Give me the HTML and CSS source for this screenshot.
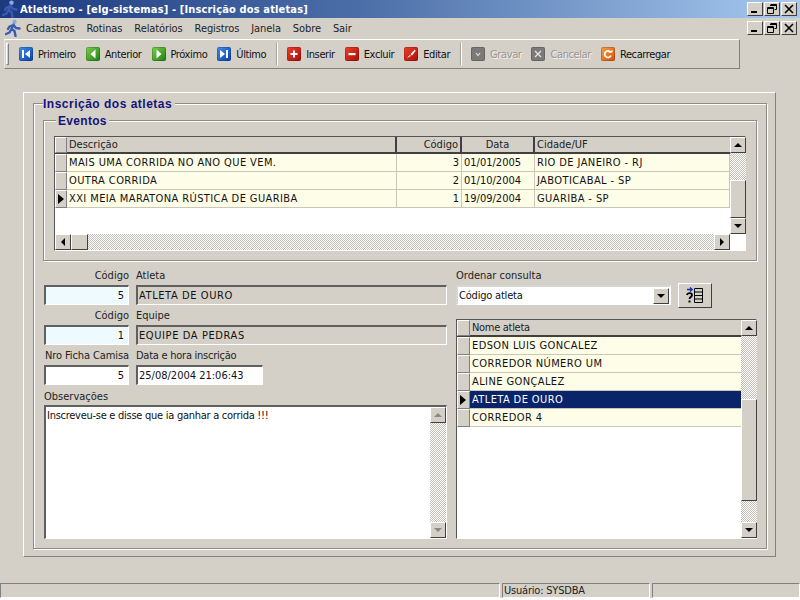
FILE: index.html
```html
<!DOCTYPE html>
<html lang="pt-BR">
<head>
<meta charset="utf-8">
<title>Atletismo</title>
<link rel="stylesheet" href="styles.css">
</head>
<body>
<svg class="defs" width="0" height="0" aria-hidden="true">
  <defs>
    <symbol id="runner" viewBox="0 0 16 18">
      <circle cx="9.5" cy="2.8" r="2.2" fill="#8fa8e4"/>
      <path d="M8.5 5.500 L6.500 10 L9.500 12 L10.500 17 M6.500 10 L4.500 13.500 L1 15 M8.500 6 L4.500 7.500 L3 10 M8.500 6 L11 9 L14.500 9.500" fill="none" stroke="#3a5cb0" stroke-width="2.400" stroke-linecap="round" stroke-linejoin="round"/>
    </symbol>
  </defs>
</svg>
<div class="app">
  <header class="titlebar">
    <svg class="runner" width="16" height="18"><use href="#runner"/></svg>
    <span class="title-text">Atletismo - [elg-sistemas] - [Inscrição dos atletas]</span>
    <div class="winbtns">
      <span class="wb"><svg width="10" height="10"><rect x="1" y="7" width="6" height="2" fill="#000"/></svg></span>
      <span class="wb"><svg width="10" height="10"><path d="M3.500 .5h6v5h-2M.5 3.500h6v6h-6z M3 1.500h6M1 4.500h5" fill="none" stroke="#000"/></svg></span>
      <span class="wb"><svg width="10" height="10"><path d="M1 1l8 8M9 1l-8 8" stroke="#000" stroke-width="1.600"/></svg></span>
    </div>
  </header>

  <nav class="menubar">
    <svg class="runner" width="16" height="18"><use href="#runner"/></svg>
    <span class="menu-item">Cadastros</span>
    <span class="menu-item">Rotinas</span>
    <span class="menu-item">Relatórios</span>
    <span class="menu-item">Registros</span>
    <span class="menu-item">Janela</span>
    <span class="menu-item">Sobre</span>
    <span class="menu-item">Sair</span>
    <div class="winbtns">
      <span class="wb"><svg width="10" height="10"><rect x="1" y="7" width="6" height="2" fill="#000"/></svg></span>
      <span class="wb"><svg width="10" height="10"><path d="M3.500 .5h6v5h-2M.5 3.500h6v6h-6z M3 1.500h6M1 4.500h5" fill="none" stroke="#000"/></svg></span>
      <span class="wb"><svg width="10" height="10"><path d="M1 1l8 8M9 1l-8 8" stroke="#000" stroke-width="1.600"/></svg></span>
    </div>
  </nav>

  <div class="toolbar">
    <span class="grip"></span>
    <div class="tb-group">
      <span class="tb-btn"><span class="ico blue"><svg width="10" height="10"><path d="M1 1h2v8H1zM9 1v8L4 5z" fill="#fff"/></svg></span><span>Primeiro</span></span>
      <span class="tb-btn"><span class="ico green"><svg width="10" height="10"><path d="M7.500 .5v9L2.500 5z" fill="#fff"/></svg></span><span>Anterior</span></span>
      <span class="tb-btn"><span class="ico green"><svg width="10" height="10"><path d="M2.500 .5v9l5-4.500z" fill="#fff"/></svg></span><span>Próximo</span></span>
      <span class="tb-btn"><span class="ico blue"><svg width="10" height="10"><path d="M7 1h2v8H7zM1 1v8l5-4z" fill="#fff"/></svg></span><span>Último</span></span>
    </div>
    <span class="tb-sep"></span>
    <div class="tb-group">
      <span class="tb-btn"><span class="ico red"><svg width="10" height="10"><path d="M4 1.500h2v2.500h2.500v2H6v2.500H4V6H1.500V4H4z" fill="#fff"/></svg></span><span>Inserir</span></span>
      <span class="tb-btn"><span class="ico red"><svg width="10" height="10"><rect x="1.500" y="4" width="7" height="2.200" fill="#fff"/></svg></span><span>Excluir</span></span>
      <span class="tb-btn"><span class="ico red"><svg width="10" height="10"><path d="M9 .5 L4.500 5 L6 6.500 L9.500 2zM4 5.800 L1 9 L4.800 7z" fill="#fff"/></svg></span><span>Editar</span></span>
    </div>
    <span class="tb-sep"></span>
    <div class="tb-group">
      <span class="tb-btn off"><span class="ico grey"><svg width="10" height="10"><path d="M3 4l2 2.500L7 4" fill="none" stroke="#ddd" stroke-width="1.200"/></svg></span><span>Gravar</span></span>
      <span class="tb-btn off"><span class="ico grey"><svg width="10" height="10"><path d="M2 2l6 6M8 2L2 8" stroke="#e4e4e4" stroke-width="1.300"/></svg></span><span>Cancelar</span></span>
      <span class="tb-btn"><span class="ico orange"><svg width="10" height="10"><path d="M7.800 3.500A3.300 3.300 0 1 0 8 6.500" fill="none" stroke="#fff" stroke-width="1.700"/><path d="M5 3.500h4.500V1z" fill="#fff"/></svg></span><span>Recarregar</span></span>
    </div>
  </div>

  <main class="workspace">
    <section class="panel">
      <div class="group group-main">
        <h1 class="group-title title-main">Inscrição dos atletas</h1>

        <div class="group group-events">
          <h2 class="group-title title-events">Eventos</h2>
          <div class="dbgrid grid-events">
            <div class="grid-body">
              <div class="row head ev">
                <span class="ind"></span><span class="cell">Descrição</span><span class="cell num">Código</span><span class="cell ctr">Data</span><span class="cell">Cidade/UF</span>
              </div>
              <div class="row ev">
                <span class="ind"></span><span class="cell">MAIS UMA CORRIDA NO ANO QUE VEM.</span><span class="cell num">3</span><span class="cell nums">01/01/2005</span><span class="cell">RIO DE JANEIRO - RJ</span>
              </div>
              <div class="row ev">
                <span class="ind"></span><span class="cell">OUTRA CORRIDA</span><span class="cell num">2</span><span class="cell nums">01/10/2004</span><span class="cell">JABOTICABAL - SP</span>
              </div>
              <div class="row ev">
                <span class="ind cur"></span><span class="cell">XXI MEIA MARATONA RÚSTICA DE GUARIBA</span><span class="cell num">1</span><span class="cell nums">19/09/2004</span><span class="cell">GUARIBA - SP</span>
              </div>
            </div>
            <div class="vscroll">
              <span class="sb-btn"><i class="arr up"></i></span>
              <span class="track t1"></span>
              <span class="thumb th1"></span>
              <span class="sb-btn"><i class="arr down"></i></span>
            </div>
            <div class="hscroll">
              <span class="sb-btn"><i class="arr left"></i></span>
              <span class="thumb th-h"></span>
              <span class="track"></span>
              <span class="sb-btn"><i class="arr right"></i></span>
            </div>
          </div>
        </div>

        <div class="lower">
          <div class="form-col">
            <div class="frow labels">
              <label class="lab code-lab">Código</label><label class="lab">Atleta</label>
            </div>
            <div class="frow">
              <span class="field code lightblue">5</span><span class="field wide ro">ATLETA DE OURO</span>
            </div>
            <div class="frow labels">
              <label class="lab code-lab">Código</label><label class="lab">Equipe</label>
            </div>
            <div class="frow">
              <span class="field code lightblue">1</span><span class="field wide ro">EQUIPE DA PEDRAS</span>
            </div>
            <div class="frow labels">
              <label class="lab code-lab tight">Nro Ficha Camisa</label><label class="lab tighter">Data e hora inscrição</label>
            </div>
            <div class="frow">
              <span class="field code white">5</span><span class="field date white">25/08/2004 21:06:43</span>
            </div>
            <label class="lab obs-lab">Observações</label>
            <div class="memo">
              <div class="memo-text">Inscreveu-se e disse que ia ganhar a corrida !!!</div>
              <div class="vscroll vs-memo">
                <span class="sb-btn"><i class="arr up dis"></i></span>
                <span class="track"></span>
                <span class="sb-btn"><i class="arr down dis"></i></span>
              </div>
            </div>
          </div>

          <div class="list-col">
            <label class="lab">Ordenar consulta</label>
            <div class="sort-row">
              <div class="combo">
                <span class="combo-text">Código atleta</span>
                <span class="sb-btn combo-btn"><i class="arr down"></i></span>
              </div>
              <span class="sort-btn">
                <svg width="20" height="18" viewBox="0 0 20 18"><path d="M2 3.500h5M5 1.500l2.200 2-2.200 2" fill="none" stroke="#1030b0" stroke-width="1.300"/><path d="M2 9c.5-2.500 5-2.500 5 0 0 2-2.500 2-2.500 4" fill="none" stroke="#000" stroke-width="1.800"/><rect x="3.500" y="14.500" width="2" height="2" fill="#000"/><path d="M9.500 2.500h8v14h-8zM9.500 6h8M9.500 9.500h8M9.500 13h8" fill="none" stroke="#000"/></svg>
              </span>
            </div>
            <div class="dbgrid grid-athletes">
              <div class="grid-body">
                <div class="row head ath"><span class="ind"></span><span class="cell name-head">Nome atleta</span></div>
                <div class="row ath"><span class="ind"></span><span class="cell">EDSON LUIS GONCALEZ</span></div>
                <div class="row ath"><span class="ind"></span><span class="cell">CORREDOR NÚMERO UM</span></div>
                <div class="row ath"><span class="ind"></span><span class="cell">ALINE GONÇALEZ</span></div>
                <div class="row ath sel"><span class="ind cur"></span><span class="cell">ATLETA DE OURO</span></div>
                <div class="row ath"><span class="ind"></span><span class="cell">CORREDOR 4</span></div>
              </div>
              <div class="vscroll">
                <span class="sb-btn"><i class="arr up"></i></span>
                <span class="track t2"></span>
                <span class="thumb th2"></span>
                <span class="track"></span>
                <span class="sb-btn"><i class="arr down"></i></span>
              </div>
            </div>
          </div>
        </div>
      </div>
    </section>
  </main>

  <footer class="statusbar">
    <span class="st st1"></span>
    <span class="st st2">Usuário: SYSDBA</span>
    <span class="st st3"></span>
  </footer>
</div>
</body>
</html>
```
FILE: styles.css
```css
* { box-sizing: border-box; }
html, body { margin: 0; padding: 0; background: #fff; }
body { width: 800px; height: 600px; overflow: hidden; font: 11px/13px "DejaVu Sans Condensed", "Liberation Sans", sans-serif; color: #000; }
.defs { position: absolute; }
.app { height: 598px; background: #d4d0c8; display: flex; flex-direction: column; }

/* title + menu */
.titlebar { height: 18px; display: flex; align-items: center; padding: 0 3px 0 2px; background-image: linear-gradient(90deg, #1c3a80 0%, #4c6ea8 45%, #a6caf0 100%); }
.title-text { margin-left: 2px; color: #fff; font-weight: bold; font-size: 11px; letter-spacing: .15px; white-space: nowrap; }
.menubar { height: 20px; display: flex; align-items: center; padding: 0 3px 0 5px; }
.menu-item { margin-right: 12px; color: #222; letter-spacing: -.1px; }
.runner { flex: none; }
.menubar .runner { margin-right: 5px; }
.winbtns { margin-left: auto; display: flex; gap: 1px; }
.wb { width: 16px; height: 14px; display: flex; align-items: center; justify-content: center; background: #d4d0c8; border: 1px solid; border-color: #fff #404040 #404040 #fff; }

/* toolbar */
.toolbar { width: 736px; height: 30px; margin: 1px 0 0 4px; display: flex; align-items: center; border: 1px solid; border-color: #fff #808080 #808080 #e8e6e0; }
.grip { width: 3px; height: 22px; margin: 0 10px 0 1px; border: 1px solid; border-color: #fff #808080 #808080 #fff; }
.tb-group { display: flex; gap: 10px; }
.tb-btn { display: flex; align-items: center; gap: 5px; white-space: nowrap; color: #111; letter-spacing: -.4px; }
.tb-btn.off { color: #98958d; text-shadow: 1px 1px 0 #f4f3ef; }
.tb-sep { width: 2px; height: 22px; margin: 0 9px 0 10px; border-left: 1px solid #a8a59d; border-right: 1px solid #fff; }
.ico { width: 14px; height: 14px; border-radius: 2px; display: flex; align-items: center; justify-content: center; box-shadow: inset 0 0 0 1px rgba(0,0,0,.18); }
.blue { background: linear-gradient(135deg, #3f8fee, #0a3fa8); }
.green { background: linear-gradient(135deg, #7ed04a, #1d7f12); }
.red { background: linear-gradient(135deg, #f0402c, #a80c06); }
.grey { background: #7b7a78; }
.orange { background: linear-gradient(135deg, #f8a040, #d84f08); }

/* form frames */
.workspace { flex: 1; padding: 23px 23px 0 23px; }
.panel { width: 753px; height: 465px; padding: 10px 8px 7px 9px; border: 1px solid; border-color: #fff #808080 #808080 #fff; }
.group { position: relative; border: 1px solid #8e8c85; box-shadow: inset 1px 1px 0 #fff, 1px 1px 0 #fff; }
.group-main { height: 446px; width: 734px; padding: 16px 9px 0 9px; }
.group-events { height: 141px; padding: 15px 10px 0 10px; }
.group-title { position: absolute; margin: 0; background: #d4d0c8; color: #14147a; font: bold 12px/14px "Liberation Sans", sans-serif; white-space: nowrap; }
.title-main { left: 9px; top: -7px; padding-right: 3px; letter-spacing: .5px; }
.title-events { left: 12px; top: -7px; padding: 0 2px; letter-spacing: .3px; }

/* grids */
.dbgrid { display: grid; border: 1px solid; border-color: #555 #fff #fff #555; background: #fff; }
.grid-events { height: 115px; grid-template-columns: 675px 16px; grid-template-rows: 97px 16px; }
.grid-body { overflow: hidden; }
.row { height: 18px; display: grid; background: #fefde8; border-bottom: 1px solid #c8c7b8; }
.row.head { height: 17px; background: #d4d0c8; border-bottom: 2px solid #404040; }
.ev { grid-template-columns: 12px 330px 65px 73px 1fr; }
.ath { grid-template-columns: 13px 1fr; }
.cell { padding: 2px 2px 0 2px; white-space: nowrap; overflow: hidden; border-right: 1px solid #c8c7b8; color: #111; line-height: 14px; letter-spacing: .4px; }
.head .cell { padding-top: 1px; border-right: 2px solid #404040; color: #222; letter-spacing: 0; }
.head .cell:last-child, .ath .cell { border-right: 0; }
.head .name-head { letter-spacing: -.3px; }
.num, .nums { letter-spacing: 0; }
.num { text-align: right; }
.ctr { text-align: center; }
.ind { position: relative; background: #d4d0c8; border: 1px solid; border-color: #fff #808080 #808080 #fff; margin-bottom: -1px; }
.cur::after { content: ""; position: absolute; left: 2px; top: 3px; border-left: 6px solid #000; border-top: 5px solid transparent; border-bottom: 5px solid transparent; }
.sel { background: #0a246a; }
.sel .cell { color: #fff; }

/* scrollbars */
.vscroll { display: flex; flex-direction: column; background: #d4d0c8; }
.hscroll { grid-column: 1; display: flex; background: #d4d0c8; }
.sb-btn { flex: none; width: 16px; height: 16px; display: flex; align-items: center; justify-content: center; background: #d4d0c8; border: 1px solid; border-color: #fff #404040 #404040 #fff; }
.track { flex: 1; background: repeating-conic-gradient(#fff 0 25%, #c4c0b8 0 50%) 0 0 / 2px 2px; }
.thumb { flex: none; display: block; background: #d4d0c8; border: 1px solid; border-color: #fff #404040 #404040 #fff; }
.th-h { width: 17px; height: 16px; }
.t1 { flex: none; height: 27px; }
.th1 { height: 38px; }
.t2 { flex: none; height: 63px; }
.th2 { height: 102px; }
.arr { display: block; width: 0; height: 0; border: 4px solid transparent; }
.up { border-top: 0; border-bottom-color: #000; }
.down { border-bottom: 0; border-top-color: #000; }
.left { border-left: 0; border-right-color: #000; }
.right { border-right: 0; border-left-color: #000; }
.up.dis { border-bottom-color: #8a8880; }
.down.dis { border-top-color: #8a8880; }

/* lower form */
.lower { display: flex; gap: 9px; margin: 7px 0 0 1px; }
.form-col { width: 403px; }
.frow { display: flex; gap: 7px; }
.frow.labels { height: 17px; align-items: flex-end; padding-bottom: 3px; }
.frow + .frow.labels { margin-top: 3px; }
.lab { display: block; color: #222; white-space: nowrap; }
.code-lab { width: 85px; text-align: right; }
.tight { letter-spacing: -.1px; }
.tighter { letter-spacing: -.25px; }
.field { display: block; height: 20px; padding: 2px 4px 0 1px; line-height: 14px; border: 2px solid; border-color: #606060 #fff #fff #606060; border-bottom-width: 1px; border-right-width: 1px; white-space: nowrap; color: #111; }
.code { width: 85px; text-align: right; }
.wide { width: 311px; letter-spacing: .6px; }
.date { width: 127px; }
.lightblue { background: #effaff; }
.white { background: #fff; }
.ro { background: #d4d0c8; }
.obs-lab { margin-top: 5px; height: 15px; }
.memo { height: 134px; display: flex; border: 2px solid; border-color: #606060 #fff #fff #606060; border-bottom-width: 1px; border-right-width: 1px; background: #fff; }
.memo-text { flex: 1; padding: 2px 1px; line-height: 14px; color: #111; letter-spacing: -.27px; }
.vs-memo { width: 16px; }

.list-col { width: 301px; }
.list-col > .lab { height: 16px; padding-top: 1px; }
.sort-row { display: flex; align-items: center; gap: 7px; height: 22px; }
.combo { width: 215px; height: 20px; display: flex; align-items: center; justify-content: space-between; background: #fff; padding: 0 1px 0 1px; border: 2px solid; border-color: #d8d6d0 #fff #fff #d8d6d0; border-right-width: 1px; border-bottom-width: 1px; }
.combo-btn { width: 16px; height: 16px; }
.combo-text { color: #111; letter-spacing: -.2px; }
.sort-btn { width: 34px; height: 25px; flex: none; display: flex; align-items: center; justify-content: center; background: #d4d0c8; border: 1px solid; border-color: #fff #404040 #404040 #fff; }
.grid-athletes { margin-top: 13px; height: 220px; grid-template-columns: 284px 16px; }

/* status */
.statusbar { height: 15px; display: flex; gap: 2px; }
.st { border: 1px solid; border-color: #808080 #fff #fff #808080; color: #222; padding-left: 1px; line-height: 14px; white-space: nowrap; letter-spacing: -.2px; }
.st1 { width: 500px; }
.st2 { width: 148px; }
.st3 { flex: 1; }
```
